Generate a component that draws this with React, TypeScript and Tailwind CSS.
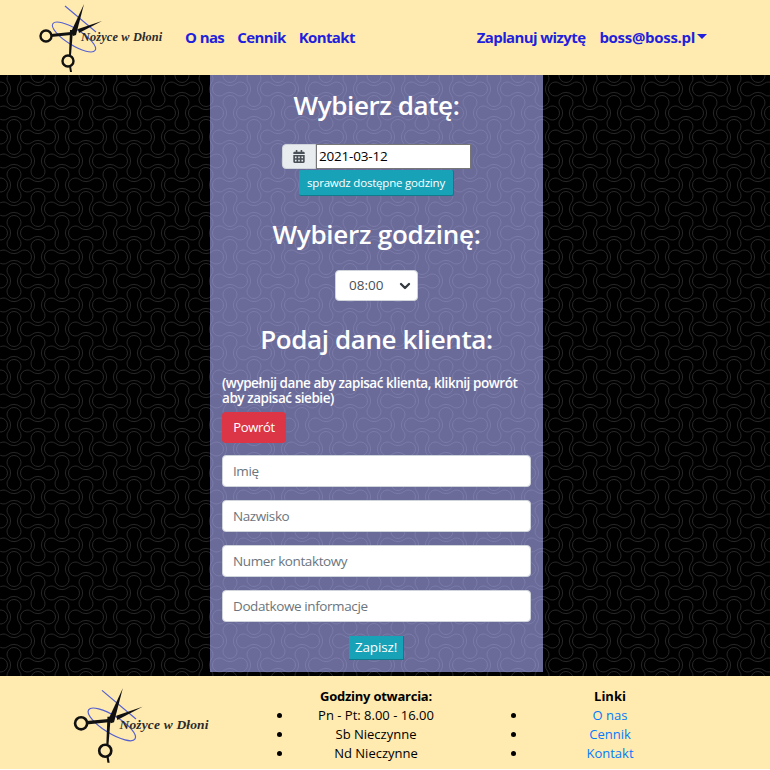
import React from 'react';
import { ChevronDown } from 'lucide-react';

const BLOB = 'M-6.2 -5.52A10.1 10.1 0 0 0 6.2 -5.52A7 7 0 1 1 6.2 5.52A10.1 10.1 0 0 0 -6.2 5.52A7 7 0 1 1 -6.2 -5.52Z';

const Pattern: React.FC = () => (
  <svg className="absolute inset-0 w-full h-full" aria-hidden="true">
    <defs>
      <pattern id="blobs" x="2" y="26" width="48" height="48" patternUnits="userSpaceOnUse">
        <g fill="none" stroke="#262626" strokeWidth="1">
          <path d={BLOB} transform="translate(12 12)" />
          <path d={BLOB} transform="translate(60 12)" />
          <path d={BLOB} transform="translate(36 36)" />
          <path d={BLOB} transform="translate(-12 36)" />
          <path d={BLOB} transform="translate(36 12) rotate(90)" />
          <path d={BLOB} transform="translate(36 60) rotate(90)" />
          <path d={BLOB} transform="translate(12 36) rotate(90)" />
          <path d={BLOB} transform="translate(12 -12) rotate(90)" />
        </g>
      </pattern>
    </defs>
    <rect width="100%" height="100%" fill="url(#blobs)" />
  </svg>
);

const Logo: React.FC<{ className: string }> = ({ className }) => (
  <svg viewBox="0 0 127 72" className={className}>
    <g fill="none" stroke="#5560d0" strokeWidth="1.1">
      <path d="M27 4L58 30" />
      <ellipse cx="36" cy="35" rx="25" ry="8" transform="rotate(32 36 35)" />
    </g>
    <g fill="none" stroke="#111" strokeWidth="2.4">
      <circle cx="8" cy="34" r="5.5" />
      <circle cx="30" cy="59" r="5.5" />
    </g>
    <path d="M13 32L33 30L33 33L13 35Z" fill="#111" />
    <path d="M31 53L32 28L35 28L33 53Z" fill="#111" />
    <path d="M32 70L31 64L33 64L34 70Z" fill="#111" />
    <path d="M33 30L46 2L38 33L35 34Z" fill="#111" />
    <path d="M40 27L64 19L41 31Z" fill="#111" />
    <text x="43" y="39" fontFamily="'Liberation Serif', serif" fontStyle="italic" fontWeight="700" fontSize="12.3" letterSpacing="0.15" fill="#2b2b2b">
      Nożyce w Dłoni
    </text>
  </svg>
);

const Heading: React.FC<{ children: React.ReactNode; className: string }> = ({ children, className }) => (
  <h3 className={`text-[26px] leading-[34px] font-semibold tracking-[-0.4px] text-white ${className}`}>{children}</h3>
);

const Field: React.FC<{ placeholder: string }> = ({ placeholder }) => (
  <input
    placeholder={placeholder}
    className="block w-[309px] h-[32px] px-[10px] bg-white border border-[#ced4da] rounded-[4px] text-[13.5px] tracking-[-0.4px] placeholder:text-[#6c757d] outline-none"
  />
);

export default function App() {
  return (
    <div className="font-['Open_Sans',sans-serif] h-[769px] flex flex-col">
      <header className="h-[75px] shrink-0 bg-[#ffeab0] flex items-center pl-[38px] pr-[63px] text-[15px] font-bold tracking-[-0.6px] text-[#1f1fdc]">
        <Logo className="w-[127px] h-[72px] mr-[20px]" />
        <nav className="flex gap-[13px]">
          <a>O nas</a>
          <a>Cennik</a>
          <a>Kontakt</a>
        </nav>
        <div className="ml-auto flex items-center gap-[14px]">
          <a>Zaplanuj wizytę</a>
          <a className="flex items-center gap-[2px] tracking-[-0.3px]">
            boss@boss.pl
            <span className="w-0 h-0 border-x-[5px] border-x-transparent border-t-[5px] border-t-[#1f1fdc] mb-[3px]" />
          </a>
        </div>
      </header>

      <main className="relative flex-1 bg-black flex justify-center items-start pr-[17px]">
        <Pattern />
        <section className="relative w-[333px] h-[597px] bg-[#b2b2ff]/60 flex flex-col items-center pt-[13px]">
          <Heading className="">Wybierz datę:</Heading>
          <div className="flex mt-[22px]">
            <span className="w-[34px] h-[25px] bg-[#e9ecef] border border-[#ced4da] rounded-l-[4px] flex items-center justify-center">
              <svg viewBox="0 0 448 512" className="w-[12px] h-[13px]" fill="#495057">
                <path d="M0 464c0 26.5 21.5 48 48 48h352c26.500 0 48-21.500 48-48V192H0v272zm320-196c0-6.600 5.400-12 12-12h40c6.600 0 12 5.400 12 12v40c0 6.600-5.400 12-12 12h-40c-6.600 0-12-5.400-12-12v-40zm0 128c0-6.600 5.400-12 12-12h40c6.600 0 12 5.400 12 12v40c0 6.600-5.400 12-12 12h-40c-6.600 0-12-5.400-12-12v-40zM192 268c0-6.600 5.400-12 12-12h40c6.600 0 12 5.400 12 12v40c0 6.600-5.400 12-12 12h-40c-6.600 0-12-5.400-12-12v-40zm0 128c0-6.600 5.400-12 12-12h40c6.600 0 12 5.400 12 12v40c0 6.600-5.400 12-12 12h-40c-6.600 0-12-5.400-12-12v-40zM64 268c0-6.600 5.400-12 12-12h40c6.600 0 12 5.400 12 12v40c0 6.600-5.400 12-12 12H76c-6.600 0-12-5.400-12-12v-40zm0 128c0-6.600 5.400-12 12-12h40c6.600 0 12 5.400 12 12v40c0 6.600-5.400 12-12 12H76c-6.600 0-12-5.400-12-12v-40zM400 64h-48V16c0-8.800-7.200-16-16-16h-32c-8.800 0-16 7.200-16 16v48H160V16c0-8.800-7.200-16-16-16h-32c-8.800 0-16 7.200-16 16v48H48C21.500 64 0 85.500 0 112v48h448v-48c0-26.500-21.500-48-48-48z" />
              </svg>
            </span>
            <div className="w-[155px] h-[25px] bg-white border border-[#767676] pl-[2px] text-[13.5px] leading-[22px] tracking-[-0.2px] text-black">2021-03-12</div>
          </div>
          <button className="w-[155px] h-[26px] mt-[1px] bg-[#17a2b8] border-b border-r border-[#117a8b] rounded-[2px] text-white text-[11.5px] tracking-[-0.2px]">
            sprawdz dostępne godziny
          </button>
          <Heading className="mt-[21px] tracking-[-0.25px]">Wybierz godzinę:</Heading>
          <div className="w-[83px] h-[31px] mt-[19px] bg-white border border-[#ced4da] rounded-[4px] flex items-center pl-[13px] pr-[4px] text-[13.5px] text-[#495057]">
            <span className="flex-1">08:00</span>
            <ChevronDown className="w-[16px] h-[16px] text-[#343a40]" strokeWidth={3.5} />
          </div>
          <Heading className="mt-[21px]">Podaj dane klienta:</Heading>
          <div className="w-[309px] mt-[20px] flex flex-col items-start">
            <p className="text-[13.5px] leading-[15px] font-semibold tracking-[-0.45px] text-white">
              (wypełnij dane aby zapisać klienta, kliknij powrót aby zapisać siebie)
            </p>
            <button className="w-[64px] h-[31px] mt-[6px] bg-[#dc3545] rounded-[4px] text-white text-[13px] tracking-[-0.3px]">Powrót</button>
            <div className="flex flex-col gap-[13px] mt-[12px]">
              <Field placeholder="Imię" />
              <Field placeholder="Nazwisko" />
              <Field placeholder="Numer kontaktowy" />
              <Field placeholder="Dodatkowe informacje" />
            </div>
          </div>
          <button className="w-[55px] h-[24px] mt-[14px] bg-[#17a2b8] border-b border-r border-[#117a8b] text-white text-[13.5px] tracking-[-0.15px]">Zapisz!</button>
        </section>
      </main>

      <footer className="h-[93px] shrink-0 bg-[#ffeab0] flex pl-[72px] pt-[11px] text-[13px] leading-[19px] text-black">
        <Logo className="w-[140px] h-[79px] -mt-[1px]" />
        <ul className="w-[166px] ml-[81px] list-disc text-center">
          <h6 className="font-bold tracking-[-0.25px]">Godziny otwarcia:</h6>
          <li>Pn - Pt: 8.00 - 16.00</li>
          <li>Sb Nieczynne</li>
          <li>Nd Nieczynne</li>
        </ul>
        <ul className="w-[166px] ml-[68px] list-disc text-center">
          <h6 className="font-bold">Linki</h6>
          <li><a className="text-[#007bff]">O nas</a></li>
          <li><a className="text-[#007bff]">Cennik</a></li>
          <li><a className="text-[#007bff]">Kontakt</a></li>
        </ul>
      </footer>
    </div>
  );
}
